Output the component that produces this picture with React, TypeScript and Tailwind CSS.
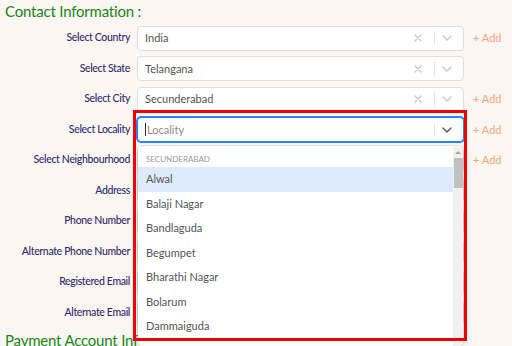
import React from "react";

interface Row {
  label: string;
  value?: string;
  add?: boolean;
  clear?: boolean;
  focused?: boolean;
}

const rows: Row[] = [
  { label: "Select Country", value: "India", add: true, clear: true },
  { label: "Select State", value: "Telangana", clear: true },
  { label: "Select City", value: "Secunderabad", add: true, clear: true },
  { label: "Select Locality", add: true, focused: true },
  { label: "Select Neighbourhood", add: true },
  { label: "Address" },
  { label: "Phone Number" },
  { label: "Alternate Phone Number" },
  { label: "Registered Email" },
  { label: "Alternate Email" },
];

const localities = [
  "Alwal",
  "Balaji Nagar",
  "Bandlaguda",
  "Begumpet",
  "Bharathi Nagar",
  "Bolarum",
  "Dammaiguda",
  "Dhulapally",
];

function ClearIcon() {
  return (
    <svg width="8" height="8" viewBox="0 0 8 8" fill="none" stroke="#c8c8c8" strokeWidth="1.4" strokeLinecap="round">
      <path d="M1 1L7 7M7 1L1 7" />
    </svg>
  );
}

function Chevron({ dark }: { dark?: boolean }) {
  return (
    <svg width="10" height="6" viewBox="0 0 10 6" fill="none" stroke={dark ? "#555" : "#c8c8c8"} strokeWidth="1.4" strokeLinecap="round" strokeLinejoin="round">
      <path d="M1 1L5 5L9 1" />
    </svg>
  );
}

function LocalityMenu() {
  return (
    <div className="absolute left-0 top-[calc(100%+5px)] z-10 h-[200px] w-full overflow-hidden rounded-[4px] bg-white shadow-[0_0_0_1px_rgba(0,0,0,0.08),0_4px_11px_rgba(0,0,0,0.1)]">
      <div className="pr-[10px]">
        <div className="h-[21px] pl-[8px] pt-[8px] text-[8px] leading-[10px] uppercase text-[#999]">Secunderabad</div>
        {localities.map((l, i) => (
          <div
            key={l}
            className={`flex h-[24.5px] items-center pl-[8px] text-[11px] text-[#555] ${i === 0 ? "bg-[#deebff]" : ""}`}
          >
            {l}
          </div>
        ))}
      </div>
      {/* scrollbar */}
      <div className="absolute right-0 top-[1px] bottom-0 w-[10px] bg-[#f1f1f1]">
        <div className="flex h-[10px] items-center justify-center">
          <div className="h-0 w-0 border-x-[3px] border-b-[3px] border-x-transparent border-b-[#a3a3a3]" />
        </div>
        <div className="ml-[1px] mt-[1px] h-[30px] w-[9px] bg-[#c1c1c1]" />
      </div>
    </div>
  );
}

function SelectBox({ row }: { row: Row }) {
  return (
    <div
      className={`relative ml-[7px] flex h-[25px] w-[327px] items-center rounded-[4px] bg-white pr-[4px] ${
        row.focused
          ? "border border-[#2684ff] shadow-[0_0_0_1px_#2684ff]"
          : "border border-[#dedede]"
      }`}
    >
      <div className="flex flex-1 items-center pl-[7px] text-[11px] text-[#555]">
        {row.focused ? (
          <>
            <span className="mr-[1px] h-[13px] w-px bg-[#333]" />
            <span className="text-[#8a8a8a]">Locality</span>
          </>
        ) : (
          row.value
        )}
      </div>
      {(row.value || row.focused) && (
        <div className="flex items-center">
          {row.clear && (
            <div className="mr-[6px] flex w-[20px] justify-center">
              <ClearIcon />
            </div>
          )}
          <div className="h-[14px] w-px bg-[#e4e4e4]" />
          <div className="flex w-[24px] justify-center">
            <Chevron dark={row.focused} />
          </div>
        </div>
      )}
      {row.focused && <LocalityMenu />}
    </div>
  );
}

export default function App() {
  return (
    <div className="relative h-[346px] w-[512px] overflow-hidden bg-[#fdf7f3] font-['Lato',sans-serif]">
      <h2 className="h-[23px] pl-[5px] text-[15px] leading-[23px] tracking-[-0.2px] text-[#168716]">Contact Information :</h2>

      <div className="flex flex-col">
        {rows.map((row) => (
          <div key={row.label} className="flex h-[30.5px] items-center">
            <label className="w-[130px] text-right text-[10.5px] font-medium tracking-[-0.35px] text-[#2f2b70]">{row.label}</label>
            <SelectBox row={row} />
            {row.add && <span className="ml-[9px] text-[11px] text-[#f5a47c]">+ Add</span>}
          </div>
        ))}
      </div>

      <h2 className="h-[22px] pl-[5px] pt-[1px] text-[15px] leading-[22px] tracking-[-0.2px] text-[#168716]">Payment Account Information :</h2>

      {/* highlight annotation */}
      <div className="pointer-events-none absolute left-[133px] top-[110px] z-20 h-[231px] w-[334px] border-[3px] border-[#f20000]" />
    </div>
  );
}
